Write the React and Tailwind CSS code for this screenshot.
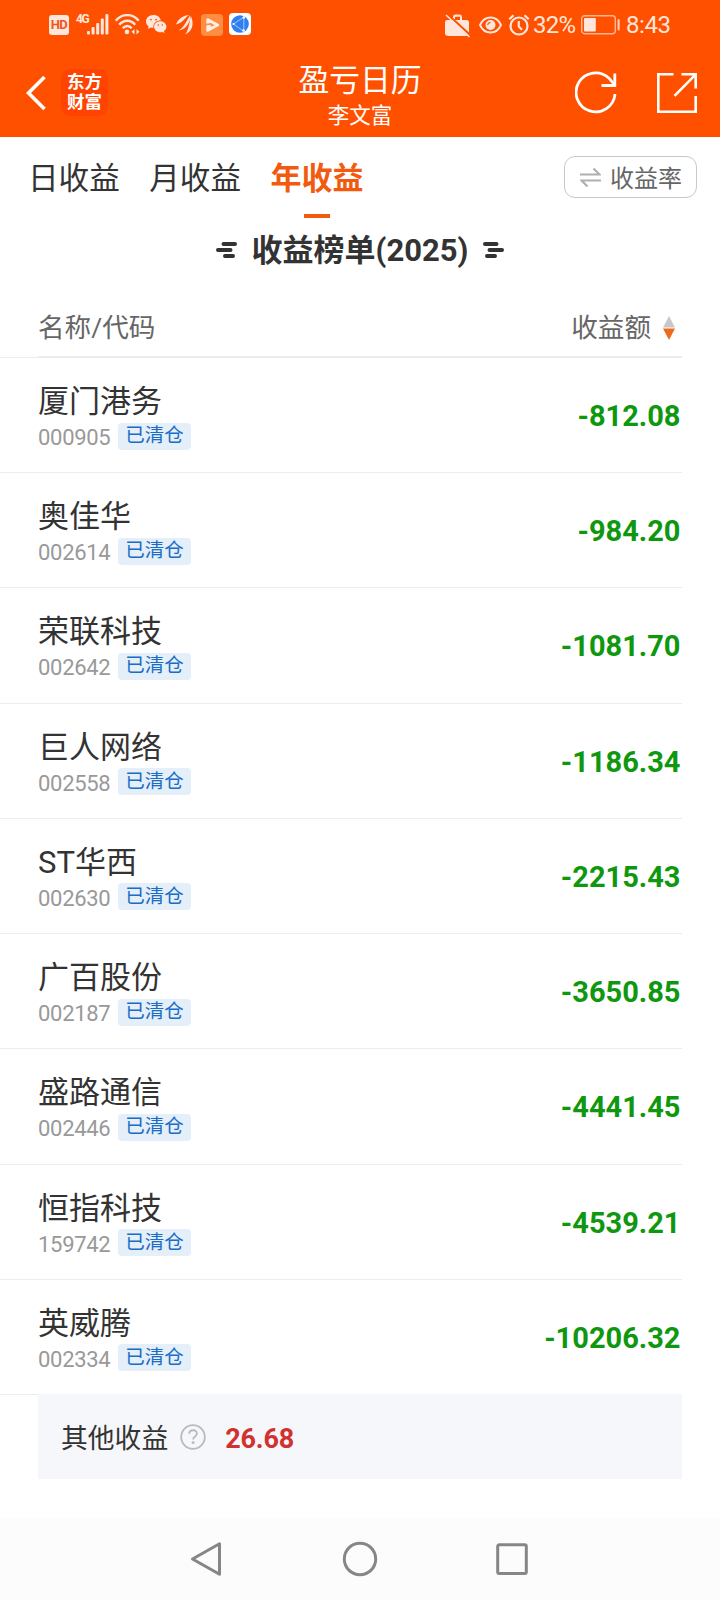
import React, { useState } from "react";

const stocks = [
  { name: "厦门港务", code: "000905", amount: "-812.08" },
  { name: "奥佳华", code: "002614", amount: "-984.20" },
  { name: "荣联科技", code: "002642", amount: "-1081.70" },
  { name: "巨人网络", code: "002558", amount: "-1186.34" },
  { name: "ST华西", code: "002630", amount: "-2215.43" },
  { name: "广百股份", code: "002187", amount: "-3650.85" },
  { name: "盛路通信", code: "002446", amount: "-4441.45" },
  { name: "恒指科技", code: "159742", amount: "-4539.21" },
  { name: "英威腾", code: "002334", amount: "-10206.32" },
];

const tabs = ["日收益", "月收益", "年收益"];

const StatusBar = () => (
  <div className="flex h-12 items-start pt-[13px] pl-[49px] pr-[51px] text-[#ffe6dc]">
    <div className="mt-[2px] flex h-5 w-5 items-center justify-center rounded-[3px] bg-[#ffe6dc] text-[13px] font-bold tracking-[-0.5px] text-[#f0561a]">
      HD
    </div>
    <span className="ml-[7px] w-[11px] text-[12px] leading-[12px] font-bold tracking-[-1.5px] whitespace-nowrap">4G</span>
    <svg className="mt-px" width="22" height="21" viewBox="0 0 22 21" fill="currentColor">
      <rect x="0" y="17" width="3" height="3.5" rx="1" />
      <rect x="4.6" y="13" width="3" height="7.5" rx="1" />
      <rect x="9.2" y="9" width="3" height="11.5" rx="1" />
      <rect x="13.8" y="4.5" width="3" height="16" rx="1" />
      <rect x="18.4" y="0" width="3" height="20.5" rx="1" />
    </svg>
    <svg className="ml-[6px] mt-px" width="25" height="21" viewBox="0 0 25 21" fill="none" stroke="currentColor" strokeWidth="2.4">
      <path d="M.8 6.700C7-.7 17.500-.7 23.700 6.700" />
      <path d="M4.300 10.800C8.700 5.300 15.800 5.300 20.200 10.800" />
      <path d="M7.800 14.300c2.500-3 6.400-3 8.900 0" />
      <circle cx="12" cy="17.900" r="2.300" fill="currentColor" stroke="none" />
      <path d="M19.500 15v5.500l-3-2.700zM21.500 15v5.500l3-2.700z" fill="currentColor" stroke="none" />
    </svg>
    <svg className="ml-[6px] mt-[2px]" width="21" height="19" viewBox="0 0 21 19" fill="currentColor">
      <path d="M7.500 0C3.300 0 0 2.800 0 6.400c0 2 1 3.700 2.700 4.900L2 13.900l2.800-1.500c.9.200 1.800.4 2.700.4C7 8.500 10 5.600 14.800 5.300 14.200 2.200 11.200 0 7.500 0z" />
      <path d="M14.300 6.200c-3.400 0-6.200 2.400-6.200 5.500s2.800 5.500 6.200 5.500c.7 0 1.400-.1 2-.3l2.200 1.200-.6-2c1.500-1 2.500-2.600 2.500-4.400 0-3.100-2.700-5.500-6.100-5.500z" />
      <g fill="#ff5000">
        <circle cx="5" cy="4.600" r=".9" />
        <circle cx="10" cy="4.600" r=".9" />
        <circle cx="12.300" cy="10" r=".8" />
        <circle cx="16.300" cy="10" r=".8" />
      </g>
    </svg>
    <svg className="ml-[9px] mt-[2px]" width="17" height="20" viewBox="0 0 17 20" fill="currentColor">
      <path d="M0 9.500C2 4 7 .3 13.500 0 9.500 1.500 6.500 8.500 0 9.500z" />
      <path d="M2.500 15.500C9 12 10.500 5 14.300.6 14.800 6 11 14.500 2.500 15.500z" />
      <path d="M9 19.500C13.500 14 13 7 15 1.200 18 8 17 16 9 19.500z" />
    </svg>
    <svg className="ml-[8px] mt-px" width="22" height="22" viewBox="0 0 22 22">
      <rect width="22" height="22" rx="4" fill="#ff8d42" />
      <path d="M6.800 9.500V5.800L16.500 11 6.800 16.200v-3.700h3" fill="none" stroke="#fff0e6" strokeWidth="3" strokeLinejoin="round" />
    </svg>
    <svg className="ml-[6px]" width="22" height="22" viewBox="0 0 22 22">
      <rect width="22" height="22" rx="4" fill="#fff" />
      <circle cx="11" cy="11" r="8.800" fill="#2f7ff0" />
      <path d="M14.800 4.200 4.500 11l10 7.200M14.800 4.200v14" fill="none" stroke="#a9d0ff" strokeWidth=".9" />
      <circle cx="14.800" cy="4.500" r="1.200" fill="#fff" />
      <circle cx="4.500" cy="11" r="1.100" fill="#fff" />
      <circle cx="14.500" cy="17.500" r="1.200" fill="#fff" />
    </svg>

    <div className="ml-auto flex items-start">
      <svg width="28" height="25" viewBox="0 0 28 25">
        <path d="M3 7h6V4q0-2.500 2.500-2.500h4Q18 1.500 18 4v3h4.500Q25 7 25 9.500v11q0 2.500-2.500 2.500h-17Q1 23 1 20.500V9Q1 7 3 7z" fill="currentColor" />
        <path d="M11 7V3.800h5V7z" fill="#ff5000" />
        <path d="M3.800 1.500 26.800 22.500" stroke="#ff5000" strokeWidth="2.200" />
        <path d="M2 2 25.500 24" stroke="currentColor" strokeWidth="1.600" />
      </svg>
      <svg className="ml-[7px] mt-[3px]" width="23" height="18" viewBox="0 0 23 18" fill="none" stroke="currentColor" strokeWidth="1.900">
        <path d="M1 9C5.500-1 17.500-1 22 9 17.500 19 5.500 19 1 9z" />
        <circle cx="11.500" cy="9" r="5" fill="currentColor" stroke="none" />
        <path d="M8.800 9a2.700 2.700 0 0 1 2.700-2.700" stroke="#ff5000" strokeWidth="1.200" />
      </svg>
      <svg className="ml-[6px] mt-px" width="22" height="22" viewBox="0 0 22 22" fill="none" stroke="currentColor" strokeWidth="2.200">
        <circle cx="11" cy="12" r="8.500" />
        <path d="M1.300 5.200 5.500 1.300M16.500 1.300l4.200 3.900M10.800 7v5.500l3.200 3.200" />
      </svg>
      <span className="ml-[3px] w-[43px] text-[24px] leading-[25px] tracking-[-0.7px] whitespace-nowrap">32%</span>
      <svg className="ml-[5px] mt-[2px]" width="39" height="20" viewBox="0 0 39 20">
        <rect x=".7" y=".7" width="33.600" height="18" rx="3" fill="none" stroke="#ffb595" strokeWidth="1.400" />
        <rect x="3" y="3" width="11.800" height="13.500" rx="1" fill="currentColor" />
        <rect x="36.500" y="4" width="2.200" height="11.500" rx="1" fill="#ffc9b0" />
      </svg>
      <span className="ml-[6px] w-[43px] text-[24px] leading-[25px] tracking-[-0.4px] whitespace-nowrap">8:43</span>
    </div>
  </div>
);

const Header = () => (
  <header className="h-[137px] bg-[#ff5000] text-white">
    <StatusBar />
    <div className="grid h-[89px] grid-cols-3">
      <div className="flex items-center pl-[26px]">
        <svg width="20" height="36" viewBox="0 0 20 36" fill="none" stroke="currentColor" strokeWidth="3.600">
          <path d="M18.500 2 2.500 18l16 16" />
        </svg>
        <div className="ml-[15px] flex h-[47px] w-[47px] flex-col items-center justify-center rounded-[9px] bg-[#ff4300] text-[17.5px] leading-[19.5px] font-bold">
          <span>东方</span>
          <span>财富</span>
        </div>
      </div>
      <div className="flex flex-col items-center pt-[15px]">
        <h1 className="text-[30.8px] leading-[36px]">盈亏日历</h1>
        <p className="mt-[4px] text-[21.5px] leading-[26px]">李文富</p>
      </div>
      <div className="flex items-start justify-end pt-[23px] pr-[22px]">
        <svg width="43" height="43" viewBox="0 0 43 43" fill="none" stroke="currentColor" strokeWidth="2.800">
          <path d="M40 23A19.500 19.500 0 1 1 34 7.200l5 6" />
          <path d="M39.800 2.500v12H26.500" />
        </svg>
        <svg className="ml-[38px]" width="42" height="43" viewBox="0 0 42 43" fill="none" stroke="currentColor" strokeWidth="2.600">
          <path d="M17.500 3.300H2.300v37.400h37.400V25" />
          <path d="M25.500 3.300h14.200v14.200M39.700 3.300 18.500 24.800" />
        </svg>
      </div>
    </div>
  </header>
);

const TitleMark = ({ flip }) => (
  <svg
    className={flip ? "-scale-x-100" : ""}
    width="21"
    height="17"
    viewBox="0 0 21 17"
    fill="none"
    stroke="#333"
    strokeWidth="4"
    strokeLinecap="round"
  >
    <path d="M7.500 2H19M2 8h12.500M9 14h8" />
  </svg>
);

const StockRow = ({ stock }) => (
  <li className="flex flex-1 items-start justify-between border-b border-[#ececec] pl-[38px]">
    <div className="pt-[26px]">
      <div className="text-[31px] leading-[36px] text-[#333]">{stock.name}</div>
      <div className="mt-[2px] flex items-start">
        <span className="w-[80px] pt-[3px] text-[22px] leading-[26px] tracking-[-0.3px] text-[#999]">{stock.code}</span>
        <span className="mt-[0.500px] flex h-[27px] w-[73px] items-center justify-center rounded-[4px] bg-[#e4effa] text-[19.5px] leading-[24px] text-[#1a6cc4]">
          已清仓
        </span>
      </div>
    </div>
    <span className="pt-[41px] pr-[1.500px] text-[29px] leading-[34px] font-bold text-[#0f980f]">
      {stock.amount}
    </span>
  </li>
);

const NavBar = () => (
  <nav className="flex h-[82px] items-center justify-center bg-[#fcfcfc]">
    <svg width="34" height="36" viewBox="0 0 34 36" fill="none" stroke="#868686" strokeWidth="3" strokeLinejoin="round">
      <path d="M3.500 18 30.500 2.800v30.400z" />
    </svg>
    <svg className="ml-[119px]" width="36" height="36" viewBox="0 0 36 36" fill="none" stroke="#868686" strokeWidth="3">
      <circle cx="18" cy="18" r="15.700" />
    </svg>
    <svg className="mr-[2px] ml-[117px]" width="34" height="36" viewBox="0 0 34 36" fill="none" stroke="#868686" strokeWidth="3">
      <rect x="2.700" y="3.800" width="28.600" height="28.600" rx="1.500" />
    </svg>
  </nav>
);

const App = () => {
  const [activeTab, setActiveTab] = useState("年收益");

  return (
    <div className="flex h-[1600px] w-[720px] flex-col overflow-hidden bg-white font-[Roboto,'Noto_Sans_CJK_SC',sans-serif] text-[#333]">
      <Header />

      <div className="flex h-[81px] justify-between pl-[28px] pr-[23px]">
        <div className="flex gap-[29.500px]">
          {tabs.map((tab) => (
            <button
              key={tab}
              onClick={() => setActiveTab(tab)}
              className={`flex flex-col items-center justify-between pt-[24px] leading-[36px] ${
                tab === activeTab ? "text-[31px] font-bold text-[#f25a10]" : "text-[30.6px] text-[#333]"
              }`}
            >
              {tab}
              {tab === activeTab && <span className="h-[4px] w-[26px] bg-[#f25a10]" />}
            </button>
          ))}
        </div>
        <button className="mt-[19px] flex h-[42px] w-[133px] items-center rounded-[11px] border border-[#c8c8c8] pt-[3px] pl-[15px] text-[24px] leading-[36px] text-[#666]">
          <svg className="mr-[9px] mb-[4px]" width="21" height="20" viewBox="0 0 21 20" fill="none" stroke="#b0b0b0" strokeWidth="2.200">
            <path d="M0 7.500h19.500L13.500 1.500M21 13.500H1.500l6 6" />
          </svg>
          收益率
        </button>
      </div>

      <div className="flex h-[64px] items-center justify-center gap-[15px] text-[31px] leading-[36px] font-bold">
        <TitleMark />
        <h2 className="pt-[2px]">收益榜单(2025)</h2>
        <TitleMark flip />
      </div>

      <div className="ml-[38px] mr-[38px] flex h-[76px] items-center justify-between border-b-2 border-[#ececec] pt-[18px] text-[26.6px] leading-[32px] text-[#666]">
        <span>名称/代码</span>
        <span className="flex items-center pr-[7px]">
          收益额
          <svg className="ml-[12px]" width="12" height="24" viewBox="0 0 12 24">
            <path d="M6 0 12 11.500H0z" fill="#c8c8c8" />
            <path d="M0 12.500h12L6 24z" fill="#ee6a1e" />
          </svg>
        </span>
      </div>

      <ul className="-mt-px mr-[38px] flex h-[1038px] flex-col border-t border-[#ececec]">
        {stocks.map((stock) => (
          <StockRow key={stock.code} stock={stock} />
        ))}
      </ul>

      <div className="-mt-px mx-[38px] flex h-[85px] items-center bg-[#f6f7fa] pl-[23px]">
        <span className="pt-[4px] text-[26.800px] leading-[32px]">其他收益</span>
        <svg className="ml-[12px]" width="26" height="26" viewBox="0 0 26 26" fill="none" stroke="#b8babd" strokeWidth="1.800">
          <circle cx="13" cy="13" r="11.800" />
          <path d="M9.300 9.800c0-4.700 7.600-4.700 7.600-.3 0 2.900-3.800 3-3.800 6" />
          <circle cx="13.100" cy="18.500" r=".6" fill="#b8babd" />
        </svg>
        <span className="ml-[19px] pt-[4px] text-[27px] leading-[32px] font-bold tracking-[-0.2px] text-[#d2322f]">26.68</span>
      </div>

      <div className="mt-auto">
        <NavBar />
      </div>
    </div>
  );
};

export default App;
